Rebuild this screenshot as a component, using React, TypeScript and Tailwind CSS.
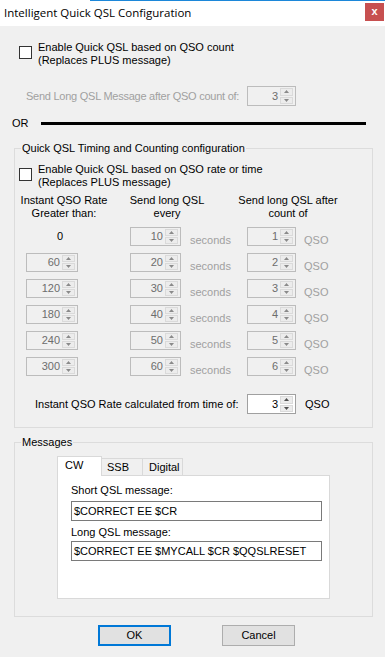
import clsx from "clsx";

function Arrow({ up, dim }: { up?: boolean; dim?: boolean }) {
  return (
    <svg width="5" height="3" viewBox="0 0 5 3" className="block">
      <path
        d={up ? "M2.5 0 L5 3 L0 3 Z" : "M0 0 L5 0 L2.5 3 Z"}
        fill={dim ? "#8a8a8a" : "#505050"}
      />
    </svg>
  );
}

function Spin({
  value,
  className,
  enabled,
}: {
  value: string;
  className: string;
  enabled?: boolean;
}) {
  return (
    <div
      className={clsx(
        "flex shrink-0 border",
        enabled
          ? "border-[#a0a0a0] bg-white text-black"
          : "border-[#bcbcbc] bg-[#f0f0f0] text-[#6d6d6d]",
        className
      )}
    >
      <span className="flex flex-1 items-center justify-end pr-[2px]">
        {value}
      </span>
      <div className="my-[1px] mr-[2px] flex w-[13px] flex-col gap-px">
        <div className="flex flex-1 items-center justify-center border border-[#dadada] bg-[#ececec]">
          <Arrow up dim={!enabled} />
        </div>
        <div className="flex flex-1 items-center justify-center border border-[#dadada] bg-[#ececec]">
          <Arrow dim={!enabled} />
        </div>
      </div>
    </div>
  );
}

function Checkbox() {
  return (
    <div className="mt-[5px] h-[13px] w-[13px] shrink-0 border border-[#333333] bg-white" />
  );
}

const rows = [
  { rate: "0", every: "10", count: "1" },
  { rate: "60", every: "20", count: "2" },
  { rate: "120", every: "30", count: "3" },
  { rate: "180", every: "40", count: "4" },
  { rate: "240", every: "50", count: "5" },
  { rate: "300", every: "60", count: "6" },
];

export default function App() {
  return (
    <div className="flex h-[657px] w-[385px] flex-col overflow-hidden whitespace-nowrap bg-[#f0f0f0] font-['Liberation_Sans',Arial,sans-serif] text-[11px] leading-[13px] text-black">
      {/* title bar */}
      <div className="relative flex h-[26px] shrink-0 items-start bg-white">
        <div className="absolute left-[90px] right-0 top-0 h-px bg-[#1c87d9]" />
        <span className="ml-[4px] mt-[5px] font-['Open_Sans',sans-serif] text-[11.5px] leading-[16px] text-black">
          Intelligent Quick QSL Configuration
        </span>
        <div className="ml-auto mr-[1px] mt-[3px] flex h-[18px] w-[19px] items-center justify-center bg-[#c75050] pb-[2px] text-[11px] font-bold text-white">
          x
        </div>
      </div>

      <div className="mt-[15px] flex pl-[19px]">
        <Checkbox />
        <div className="ml-[6px]">
          Enable Quick QSL based on QSO count
          <br />
          (Replaces PLUS message)
        </div>
      </div>

      <div className="mt-[19px] flex items-center pl-[26px]">
        <span className="w-[221px] tracking-[-0.25px] text-[#a0a0a0]">
          Send Long QSL Message after QSO count of:
        </span>
        <Spin value="3" className="h-[20px] w-[49px]" />
      </div>

      <div className="mt-[11px] flex h-[13px] items-center pl-[12px]">
        <span className="w-[29px]">OR</span>
        <div className="h-[3px] w-[325px] bg-black" />
      </div>

      <fieldset className="ml-[14px] mt-[12px] w-[359px] border border-[#dcdcdc] pb-[13px]">
        <legend className="ml-[6px] px-[1px]">
          Quick QSL Timing and Counting configuration
        </legend>
        <div className="mt-[8px] flex pl-[4px]">
          <Checkbox />
          <div className="ml-[6px]">
            Enable Quick QSL based on QSO rate or time
            <br />
            (Replaces PLUS message)
          </div>
        </div>

        <div className="mt-[5px] flex text-center">
          <div className="w-[98px]">
            Instant QSO Rate
            <br />
            Greater than:
          </div>
          <div className="w-[108px]">
            Send long QSL
            <br />
            every
          </div>
          <div className="w-[134px]">
            Send long QSL after
            <br />
            count of
          </div>
        </div>

        <div className="mt-[7px] flex flex-col gap-[7px]">
          {rows.map((r) => (
            <div key={r.every} className="flex h-[19px] items-start pl-[11px]">
              {r.rate === "0" ? (
                <div className="w-[52px] pl-[31px] leading-[19px]">0</div>
              ) : (
                <Spin value={r.rate} className="h-[19px] w-[52px]" />
              )}
              <Spin value={r.every} className="ml-[52px] h-[19px] w-[51px]" />
              <span className="ml-[9px] mt-[7px] w-[57px] text-[#a0a0a0]">
                seconds
              </span>
              <Spin value={r.count} className="h-[19px] w-[49px]" />
              <span className="ml-[8px] mt-[7px] text-[#a0a0a0]">QSO</span>
            </div>
          ))}
        </div>

        <div className="mt-[18px] flex items-center pl-[20px]">
          <span className="w-[212px]">
            Instant QSO Rate calculated from time of:
          </span>
          <Spin value="3" enabled className="h-[20px] w-[49px]" />
          <span className="ml-[9px]">QSO</span>
        </div>
      </fieldset>

      <fieldset className="ml-[14px] mt-[8px] w-[359px] border border-[#dcdcdc] pb-[17px]">
        <legend className="ml-[6px] px-[1px]">Messages</legend>
        <div className="ml-[42px] mt-[7px] flex flex-col">
          <div className="flex h-[19px] items-end">
            <div className="relative z-10 -mb-px h-[20px] w-[45px] border border-b-0 border-[#d9d9d9] bg-white pl-[7px] pt-[2px]">
              CW
            </div>
            <div className="-ml-px h-[17px] w-[42px] border border-b-0 border-[#d9d9d9] bg-[#f0f0f0] pl-[5px] pt-[2px]">
              SSB
            </div>
            <div className="-ml-px h-[17px] w-[41px] border border-b-0 border-[#d9d9d9] bg-[#f0f0f0] pl-[6px] pt-[2px]">
              Digital
            </div>
          </div>
          <div className="flex h-[124px] w-[273px] flex-col border border-[#d9d9d9] bg-white pl-[13px] pt-[8px]">
            <span>Short QSL message:</span>
            <div className="mt-[4px] h-[20px] w-[251px] border border-[#7a7a7a] bg-white pl-[2px] leading-[18px]">
              $CORRECT EE $CR
            </div>
            <span className="mt-[5px]">Long QSL message:</span>
            <div className="mt-[2px] h-[20px] w-[251px] border border-[#7a7a7a] bg-white pl-[2px] leading-[18px]">
              $CORRECT EE $MYCALL $CR $QQSLRESET
            </div>
          </div>
        </div>
      </fieldset>

      <div className="mt-[8px] flex pl-[98px]">
        <button className="flex h-[21px] w-[73px] items-center justify-center border-2 border-[#0078d7] bg-[#e1e1e1]">
          OK
        </button>
        <button className="ml-[51px] flex h-[21px] w-[73px] items-center justify-center border border-[#adadad] bg-[#e1e1e1]">
          Cancel
        </button>
      </div>
    </div>
  );
}
